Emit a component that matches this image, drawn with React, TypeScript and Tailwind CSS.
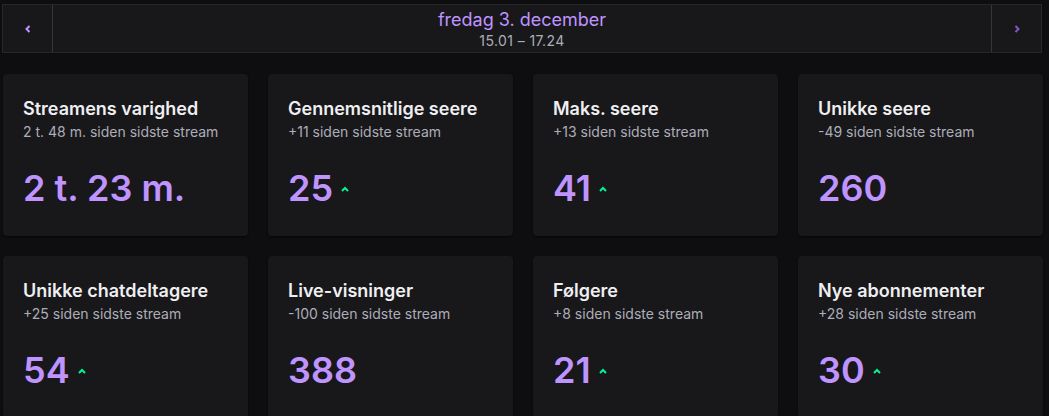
import React from "react";

type Stat = { title: string; sub: string; value: string; up?: boolean };

const stats: Stat[] = [
  { title: "Streamens varighed", sub: "2 t. 48 m. siden sidste stream", value: "2 t. 23 m." },
  { title: "Gennemsnitlige seere", sub: "+11 siden sidste stream", value: "25", up: true },
  { title: "Maks. seere", sub: "+13 siden sidste stream", value: "41", up: true },
  { title: "Unikke seere", sub: "-49 siden sidste stream", value: "260" },
  { title: "Unikke chatdeltagere", sub: "+25 siden sidste stream", value: "54", up: true },
  { title: "Live-visninger", sub: "-100 siden sidste stream", value: "388" },
  { title: "Følgere", sub: "+8 siden sidste stream", value: "21", up: true },
  { title: "Nye abonnementer", sub: "+28 siden sidste stream", value: "30", up: true },
];

function UpArrow() {
  return (
    <svg width="10" height="6" viewBox="0 0 10 6" className="ml-[7px] mt-[2px]">
      <path d="M2 5 L5 2 L8 5" fill="none" stroke="#00f593" strokeWidth="2" />
    </svg>
  );
}

function Card({ s }: { s: Stat }) {
  return (
    <div className="h-[162px] rounded-[4px] bg-[#18181b] pl-5 pt-[22px] shadow-[0_1px_2px_rgba(0,0,0,0.6)]">
      <div className="text-[18px] font-semibold leading-[26px] text-[#efeff1]">{s.title}</div>
      <div className="text-[14px] leading-5 text-[#adadb8]">{s.sub}</div>
      <div className="mt-[24px] flex items-center">
        <span className="text-[36px] font-semibold leading-[44px] text-[#bf94ff]">{s.value}</span>
        {s.up && <UpArrow />}
      </div>
    </div>
  );
}

export default function App() {
  return (
    <div className="min-h-[416px] w-[1049px] overflow-hidden bg-[#0e0e10] font-['Inter',sans-serif]">
      <div className="pl-[2px] pt-[4px]">
        <div className="flex h-[49px] w-[1040px] border border-[#26262c] bg-[#18181b]">
          <div className="flex w-[50px] items-center justify-center border-r border-[#35353b]">
            <svg width="8" height="10" viewBox="0 0 8 10">
              <path d="M5.5 2 L2.5 5 L5.5 8" fill="none" stroke="#bf94ff" strokeWidth="2" />
            </svg>
          </div>
          <div className="flex flex-1 flex-col items-center pt-[4px]">
            <div className="text-[18px] leading-[22px] text-[#bf94ff]">fredag 3. december</div>
            <div className="text-[14px] leading-[20px] tracking-[0.4px] text-[#adadb8]">15.01 – 17.24</div>
          </div>
          <div className="flex w-[50px] items-center justify-center border-l border-[#35353b]">
            <svg width="8" height="10" viewBox="0 0 8 10">
              <path d="M2.5 2 L5.5 5 L2.5 8" fill="none" stroke="#7d5bbe" strokeWidth="2" />
            </svg>
          </div>
        </div>
      </div>
      <div className="ml-[3px] mt-[21px] grid w-[1040px] grid-cols-4 gap-x-[20px] gap-y-[20px]">
        {stats.map((s) => (
          <Card key={s.title} s={s} />
        ))}
      </div>
    </div>
  );
}
